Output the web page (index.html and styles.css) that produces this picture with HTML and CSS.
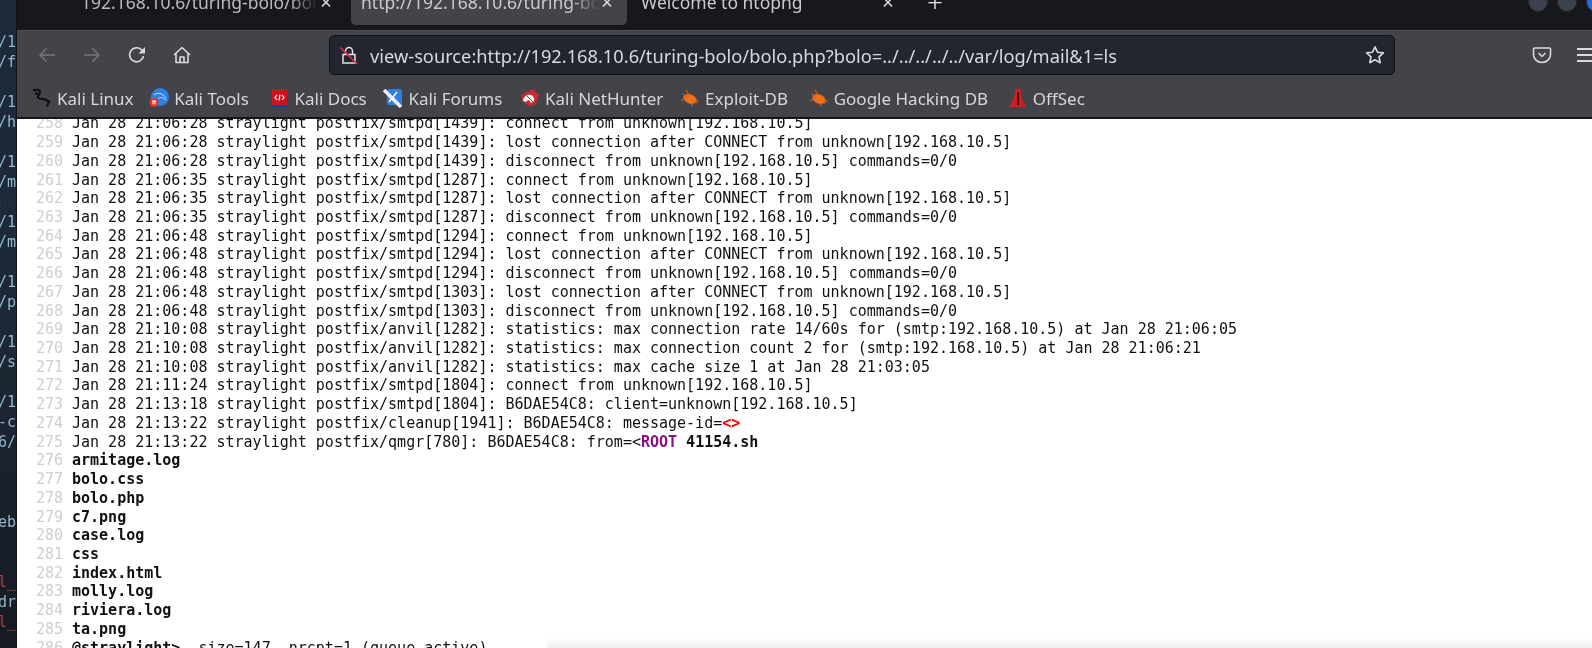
FILE: index.html
```html
<!DOCTYPE html>
<html lang="en">
<head>
<meta charset="utf-8">
<title>view-source</title>
<link rel="stylesheet" href="styles.css">
</head>
<body>
<div class="desktop">
  <aside class="term"><pre class="term-text">/1
/f

/1
/h

/1
/m
<span class="faint">pc</span>
/1
/m

/1
/p

/1
/s

/1
-c
6/



eb


<span class="red">l_</span>
dr
<span class="red">l_</span></pre></aside>
  <main class="browser">
    <div class="tabbar">
      <div class="tab tab-first"><span class="tab-label">192.168.10.6/turing-bolo/bolo.php</span><span class="tab-x">×</span></div>
      <div class="tab tab-active"><span class="tab-label">http://192.168.10.6/turing-bolo/</span><span class="tab-x">×</span></div>
      <div class="tab tab-third"><span class="tab-label">Welcome to ntopng</span><span class="tab-x">×</span></div>
      <span class="tab-plus">+</span>
      <div class="win-buttons"><i class="win"></i><i class="win"></i><i class="win win-blue"></i></div>
    </div>
    <div class="toolbar">
      <div class="nav-buttons">
        <svg class="ic dim" viewBox="0 0 20 20"><path d="M18 10H3M9.5 3.5 3 10l6.500 6.500"/></svg>
        <svg class="ic dim" viewBox="0 0 20 20"><path d="M2 10h15M10.500 3.500 17 10l-6.500 6.500"/></svg>
        <svg class="ic" viewBox="0 0 20 20"><path d="M16.500 11a7 7 0 1 1-2-6.200L17 7"/><path class="fill" d="M18 2v6.500h-6.500z"/></svg>
        <svg class="ic" viewBox="0 0 20 20"><path d="M2 10 10 2.500 18 10M4 8.500V17.500h12V8.500M8 17.500V12h4v5.500"/></svg>
      </div>
      <div class="urlbar">
        <svg class="lock" viewBox="0 0 20 20"><path class="lk" d="M4 9.500h12v8.500H4zM6.500 9.500V6a3.500 3.500 0 0 1 7 0v3.500"/><path class="slash" d="M1.500 2.500 18 19"/></svg>
        <span class="url">view-source:http://192.168.10.6/turing-bolo/bolo.php?bolo=../../../../../var/log/mail&amp;1=ls</span>
        <svg class="ic star" viewBox="0 0 20 20"><path d="M10 1.800l2.500 5.400 5.900.7-4.400 4 1.200 5.800-5.200-2.900-5.200 2.900 1.200-5.800-4.400-4 5.900-.7z"/></svg>
      </div>
      <svg class="ic pocket" viewBox="0 0 20 20"><path d="M2.500 3h15a1 1 0 0 1 1 1v5.500a8.500 8 0 0 1-17 0V4a1 1 0 0 1 1-1z"/><path d="M6.500 8l3.500 3.500L13.500 8"/></svg>
      <div class="burger"><i></i><i></i><i></i></div>
    </div>
    <div class="bookmarks">
      <a class="bm b1"><svg viewBox="0 0 20 20"><path class="dragon" d="M1 2.500c3-1.500 7-1 7 2 0 3-3 3-2 5 2 3 8 0 10 4 1 2 0 3-1 5M12 11l6 3M3 5l3 1"/></svg>Kali Linux</a>
      <a class="bm b2"><svg viewBox="0 0 20 20"><circle cx="11" cy="9" r="9" fill="#2f7fe0"/><path d="M5 7c4-3 8-2 12 3M9 11c2-2 5-2 8 1" fill="none" stroke="#cfe4fa" stroke-width="1"/><circle cx="5" cy="14.500" r="4.500" fill="#e8322e"/><path d="M3 13h4M4 13v3.500M6 13v3.500" stroke="#fff" stroke-width="1"/></svg>Kali Tools</a>
      <a class="bm b3"><svg viewBox="0 0 20 20"><rect x="3" y="1" width="15" height="17" fill="#c8141b"/><rect x="3" y="17" width="15" height="2.500" fill="#1d3f8a"/><path d="M8 7 6 9.500 8 12M13 7l2 2.500L13 12M11 6.500 10 12.500" fill="none" stroke="#fff" stroke-width="1.200"/></svg>Kali Docs</a>
      <a class="bm b4"><svg viewBox="0 0 20 20"><rect x="4" y="1" width="15" height="16" rx="2" fill="#2f7fe0"/><path d="M1 2 18 19" stroke="#eef" stroke-width="3.500"/><path d="M6 14 14 4" stroke="#fff" stroke-width="1.500"/></svg>Kali Forums</a>
      <a class="bm b5"><svg viewBox="0 0 20 20"><path d="M1 7 13 1l6 6-3 9-6 3-7-5z" fill="#c62a33"/><path d="M3 13c0-6 9-9 11-3 1 3-1 4-3 5-1-3-3-4-5-1z" fill="#f2f2f2"/><path d="M7 8l9 9" stroke="#555" stroke-width="1"/></svg>Kali NetHunter</a>
      <a class="bm b6"><svg viewBox="0 0 20 20"><ellipse cx="10" cy="11" rx="7" ry="4.500" fill="#ee6f1a" transform="rotate(22 10 11)"/><path d="M1 12h5M3 6l4 3M6 2l3 5M11 18l2-3M17 15l-3-1M19 13h-4" stroke="#d85f17" stroke-width="1.200"/></svg>Exploit-DB</a>
      <a class="bm b7"><svg viewBox="0 0 20 20"><ellipse cx="10" cy="11" rx="7" ry="4.500" fill="#ee6f1a" transform="rotate(22 10 11)"/><path d="M1 12h5M3 6l4 3M6 2l3 5M11 18l2-3M17 15l-3-1M19 13h-4" stroke="#d85f17" stroke-width="1.200"/></svg>Google Hacking DB</a>
      <a class="bm b8"><svg viewBox="0 0 20 20"><path d="M7.500 1h5l1 9 5 9H1l5-9z" fill="#d11c22"/><path d="M9 4h2v13H9z" fill="#3b0b0c"/></svg>OffSec</a>
    </div>
    <div class="viewport">
      <div class="source">
        <div class="ln"><span class="no">258</span><span>Jan 28 21:06:28 straylight postfix/smtpd[1439]: connect from unknown[192.168.10.5]</span></div>
        <div class="ln"><span class="no">259</span><span>Jan 28 21:06:28 straylight postfix/smtpd[1439]: lost connection after CONNECT from unknown[192.168.10.5]</span></div>
        <div class="ln"><span class="no">260</span><span>Jan 28 21:06:28 straylight postfix/smtpd[1439]: disconnect from unknown[192.168.10.5] commands=0/0</span></div>
        <div class="ln"><span class="no">261</span><span>Jan 28 21:06:35 straylight postfix/smtpd[1287]: connect from unknown[192.168.10.5]</span></div>
        <div class="ln"><span class="no">262</span><span>Jan 28 21:06:35 straylight postfix/smtpd[1287]: lost connection after CONNECT from unknown[192.168.10.5]</span></div>
        <div class="ln"><span class="no">263</span><span>Jan 28 21:06:35 straylight postfix/smtpd[1287]: disconnect from unknown[192.168.10.5] commands=0/0</span></div>
        <div class="ln"><span class="no">264</span><span>Jan 28 21:06:48 straylight postfix/smtpd[1294]: connect from unknown[192.168.10.5]</span></div>
        <div class="ln"><span class="no">265</span><span>Jan 28 21:06:48 straylight postfix/smtpd[1294]: lost connection after CONNECT from unknown[192.168.10.5]</span></div>
        <div class="ln"><span class="no">266</span><span>Jan 28 21:06:48 straylight postfix/smtpd[1294]: disconnect from unknown[192.168.10.5] commands=0/0</span></div>
        <div class="ln"><span class="no">267</span><span>Jan 28 21:06:48 straylight postfix/smtpd[1303]: lost connection after CONNECT from unknown[192.168.10.5]</span></div>
        <div class="ln"><span class="no">268</span><span>Jan 28 21:06:48 straylight postfix/smtpd[1303]: disconnect from unknown[192.168.10.5] commands=0/0</span></div>
        <div class="ln"><span class="no">269</span><span>Jan 28 21:10:08 straylight postfix/anvil[1282]: statistics: max connection rate 14/60s for (smtp:192.168.10.5) at Jan 28 21:06:05</span></div>
        <div class="ln"><span class="no">270</span><span>Jan 28 21:10:08 straylight postfix/anvil[1282]: statistics: max connection count 2 for (smtp:192.168.10.5) at Jan 28 21:06:21</span></div>
        <div class="ln"><span class="no">271</span><span>Jan 28 21:10:08 straylight postfix/anvil[1282]: statistics: max cache size 1 at Jan 28 21:03:05</span></div>
        <div class="ln"><span class="no">272</span><span>Jan 28 21:11:24 straylight postfix/smtpd[1804]: connect from unknown[192.168.10.5]</span></div>
        <div class="ln"><span class="no">273</span><span>Jan 28 21:13:18 straylight postfix/smtpd[1804]: B6DAE54C8: client=unknown[192.168.10.5]</span></div>
        <div class="ln"><span class="no">274</span><span>Jan 28 21:13:22 straylight postfix/cleanup[1941]: B6DAE54C8: message-id=<b class="err">&lt;&gt;</b></span></div>
        <div class="ln"><span class="no">275</span><span>Jan 28 21:13:22 straylight postfix/qmgr[780]: B6DAE54C8: from=&lt;<b class="tag">ROOT</b> <b>41154.sh</b></span></div>
        <div class="ln"><span class="no">276</span><b>armitage.log</b></div>
        <div class="ln"><span class="no">277</span><b>bolo.css</b></div>
        <div class="ln"><span class="no">278</span><b>bolo.php</b></div>
        <div class="ln"><span class="no">279</span><b>c7.png</b></div>
        <div class="ln"><span class="no">280</span><b>case.log</b></div>
        <div class="ln"><span class="no">281</span><b>css</b></div>
        <div class="ln"><span class="no">282</span><b>index.html</b></div>
        <div class="ln"><span class="no">283</span><b>molly.log</b></div>
        <div class="ln"><span class="no">284</span><b>riviera.log</b></div>
        <div class="ln"><span class="no">285</span><b>ta.png</b></div>
        <div class="ln"><span class="no">286</span><span><b>@straylight&gt;</b>, size=147, nrcpt=1 (queue active)</span></div>
      </div>
      <div class="win-shadow"></div>
    </div>
  </main>
</div>
</body>
</html>
```
FILE: styles.css
```css
* { box-sizing: border-box; }
html, body { margin: 0; height: 648px; overflow: hidden; background: #fff; }
.desktop {
  display: flex;
  width: 1592px;
  height: 648px;
  overflow: hidden;
  filter: blur(0.45px);
}
.term {
  flex: 0 0 17px;
  display: flex;
  justify-content: flex-end;
  overflow: hidden;
  background: linear-gradient(180deg, #1c2a3a 0%, #1d2836 50%, #161a22 100%);
  border-right: 1px solid #10141a;
}
.term-text {
  margin: 0;
  padding: 32px 0 0;
  flex: none;
  font: 15px/20px "DejaVu Sans Mono", monospace;
  color: #93b8cc;
  text-align: right;
}
.faint { color: #243040; }
.red { color: #a5413e; }
.browser { flex: 1; min-width: 0; display: flex; flex-direction: column; height: 648px; }

.tabbar {
  flex: 0 0 30px;
  display: flex;
  align-items: flex-start;
  background: #17181c;
  overflow: hidden;
  font-family: "Noto Sans", sans-serif;
  font-size: 17.500px;
  color: #c9cacc;
}
.tab {
  display: flex;
  align-items: center;
  height: 24.500px;
  overflow: hidden;
  white-space: nowrap;
  flex: none;
}
.tab-label { flex: 1; overflow: hidden; margin-top: -20px; line-height: 24px; min-width: 0; }
.tab-x { flex: 0 0 16px; text-align: center; margin-top: -20px; line-height: 24px; font-size: 21px; color: #d5d6d8; }
.tab-first { width: 277px; margin-left: 46px; padding-left: 18px; padding-right: 6px; margin-right: 11px; color: #b9babc; }
.tab-first .tab-label { -webkit-mask-image: linear-gradient(90deg, #000 88%, transparent 100%); mask-image: linear-gradient(90deg, #000 88%, transparent 100%); }
.tab-active {
  width: 276px;
  padding-left: 10px;
  padding-right: 12px;
  background: #42444a;
  border-radius: 0 0 5px 5px;
}
.tab-active .tab-label { -webkit-mask-image: linear-gradient(90deg, #000 88%, transparent 100%); mask-image: linear-gradient(90deg, #000 88%, transparent 100%); }
.tab-third { width: 279px; padding-left: 14px; padding-right: 10px; }
.tab-plus { flex: 0 0 20px; text-align: center; margin-left: 19px; margin-top: -13px; font-size: 28px; line-height: 28px; color: #e6e6e8; font-weight: 300; }
.win-buttons { display: flex; gap: 9px; margin-left: auto; margin-top: -8px; margin-right: -14px; flex: none; }
.win { display: block; width: 20px; height: 20px; border-radius: 50%; background: #3c4150; border: 1px solid #24262e; }
.win-blue { background: #2a6ae0; }

.toolbar {
  flex: 0 0 49px;
  display: flex;
  align-items: center;
  background: #42444a;
  border-top: 1px solid #4e4f54;
}
.nav-buttons { display: flex; align-items: center; gap: 25px; padding-left: 20px; flex: none; }
.ic {
  display: block;
  width: 20px;
  height: 20px;
  fill: none;
  stroke: #dadadc;
  stroke-width: 1.600;
  stroke-linejoin: round;
  flex: none;
}
.ic .fill { fill: #dadadc; stroke: none; }
.ic.dim { stroke: #74757a; }
.urlbar {
  display: flex;
  align-items: center;
  width: 1066px;
  height: 40px;
  margin-left: 137px;
  padding: 0 9px 0 9px;
  background: #23252f;
  border: 1px solid #101114;
  border-radius: 5px;
  flex: none;
}
.lock { width: 20px; height: 20px; fill: none; flex: none; }
.lk { stroke: #e4e4e6; stroke-width: 1.500; }
.slash { stroke: #e0264a; stroke-width: 1.700; }
.url {
  flex: 1;
  margin-left: 11px;
  font: 18.250px "Noto Sans", sans-serif;
  color: #d8d9dc;
  white-space: nowrap;
}
.pocket { margin-left: 137px; }
.burger { display: flex; flex-direction: column; gap: 4px; margin-left: 25px; width: 24px; flex: none; }
.burger i { display: block; height: 2px; background: #dadadc; }

.bookmarks {
  flex: 0 0 40px;
  display: flex;
  align-items: center;
  padding-left: 15px;
  background: #42444a;
  border-bottom: 2px solid #15161a;
  font: 17px "Noto Sans", sans-serif;
  color: #d6d7d9;
}
.bm { display: flex; align-items: center; gap: 5px; white-space: nowrap; flex: none; }
.bm svg { width: 20px; height: 20px; flex: none; }
.dragon { fill: none; stroke: #0c0c0e; stroke-width: 2; }
.b2 { margin-left: 15.600px; }
.b3 { margin-left: 20.700px; }
.b4 { margin-left: 16.700px; }
.b5 { margin-left: 17.700px; }
.b6 { margin-left: 16.700px; }
.b7 { margin-left: 20.700px; }
.b8 { margin-left: 19.700px; }

.viewport {
  position: relative;
  flex: 1;
  min-height: 0;
  overflow: hidden;
  background: #fff;
}
.source {
  margin-top: -4.600px;
  font: 15px/18.720px "DejaVu Sans Mono", monospace;
  color: #111;
}
.ln { display: flex; height: 18.720px; white-space: pre; }
.no { flex: 0 0 46px; margin-right: 9px; text-align: right; color: #cfcfcf; }
.err { color: #f00; }
.tag { color: #881280; }
.win-shadow {
  position: absolute;
  left: 530px;
  right: 0;
  bottom: 0;
  height: 10px;
  background: linear-gradient(180deg, rgba(0,0,0,0), rgba(0,0,0,0.07));
}
```
